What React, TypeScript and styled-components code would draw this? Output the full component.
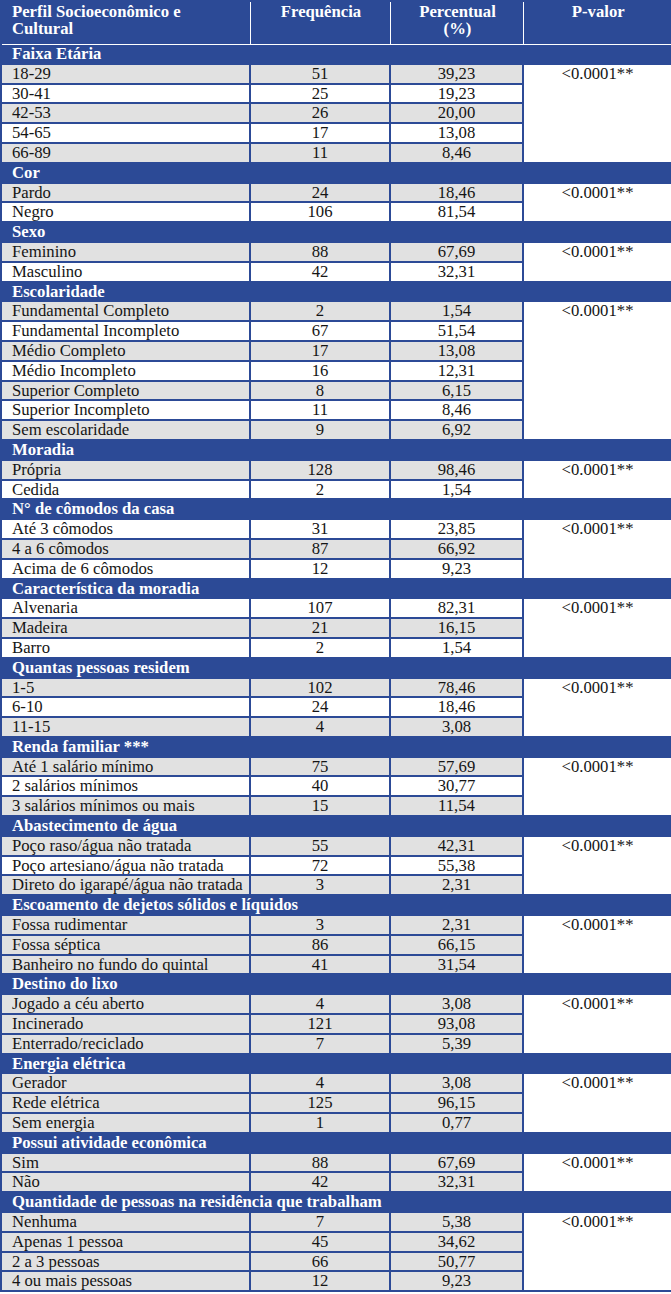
import { Fragment } from "react";
import styled, { createGlobalStyle } from "styled-components";

const BLUE = "#2c4a96";
const GRAY = "#e1e1e1";

const GlobalStyle = createGlobalStyle`
  html, body {
    margin: 0;
    padding: 0;
    background: #ffffff;
  }
  body {
    font-family: "Liberation Serif", "Times New Roman", serif;
  }
`;

const Table = styled.table`
  width: 671px;
  table-layout: fixed;
  border-collapse: collapse;
  border: 2px solid ${BLUE};
  font-family: "Liberation Serif", "Times New Roman", serif;
  font-size: 16.7px;
  color: #151515;
`;

const HeadCell = styled.th<{ $align?: "left" | "center" }>`
  height: 40px;
  padding: 2px 8px 0 10px;
  vertical-align: top;
  text-align: ${({ $align }) => $align ?? "center"};
  line-height: 16.5px;
  font-weight: bold;
  color: #ffffff;
  background: ${BLUE};
  border-right: 1px solid #ffffff;
  border-bottom: 1px solid #ffffff;
  &:last-child {
    border-right: none;
  }
`;

const SectionCell = styled.td`
  height: 17.8px;
  padding: 0 10px;
  line-height: 17.8px;
  font-weight: bold;
  color: #ffffff;
  background: ${BLUE};
  border: none;
  white-space: nowrap;
`;

const DataCell = styled.td<{ $shade: boolean; $align?: "left" | "center" }>`
  height: 17.8px;
  padding: 0 4px 0 ${({ $align }) => ($align === "left" ? "10px" : "4px")};
  line-height: 17.8px;
  text-align: ${({ $align }) => $align ?? "center"};
  background: ${({ $shade }) => ($shade ? GRAY : "#ffffff")};
  border: 2px solid ${BLUE};
  white-space: nowrap;
  overflow: hidden;
`;

const PValueCell = styled.td`
  padding: 0 4px;
  vertical-align: top;
  text-align: center;
  line-height: 17.8px;
  background: #ffffff;
  border: 2px solid ${BLUE};
`;

type Row = [string, string, string];

type Section = {
  title: string;
  shades: string;
  rows: Row[];
};

const sections: Section[] = [
  {
    title: "Faixa Etária",
    shades: "GWGWG",
    rows: [
      ["18-29", "51", "39,23"],
      ["30-41", "25", "19,23"],
      ["42-53", "26", "20,00"],
      ["54-65", "17", "13,08"],
      ["66-89", "11", "8,46"],
    ],
  },
  {
    title: "Cor",
    shades: "GW",
    rows: [
      ["Pardo", "24", "18,46"],
      ["Negro", "106", "81,54"],
    ],
  },
  {
    title: "Sexo",
    shades: "GW",
    rows: [
      ["Feminino", "88", "67,69"],
      ["Masculino", "42", "32,31"],
    ],
  },
  {
    title: "Escolaridade",
    shades: "GWGWGWG",
    rows: [
      ["Fundamental Completo", "2", "1,54"],
      ["Fundamental Incompleto", "67", "51,54"],
      ["Médio Completo", "17", "13,08"],
      ["Médio Incompleto", "16", "12,31"],
      ["Superior Completo", "8", "6,15"],
      ["Superior Incompleto", "11", "8,46"],
      ["Sem escolaridade", "9", "6,92"],
    ],
  },
  {
    title: "Moradia",
    shades: "GW",
    rows: [
      ["Própria", "128", "98,46"],
      ["Cedida", "2", "1,54"],
    ],
  },
  {
    title: "N° de cômodos da casa",
    shades: "WGW",
    rows: [
      ["Até 3 cômodos", "31", "23,85"],
      ["4 a 6 cômodos", "87", "66,92"],
      ["Acima de 6 cômodos", "12", "9,23"],
    ],
  },
  {
    title: "Característica da moradia",
    shades: "WGW",
    rows: [
      ["Alvenaria", "107", "82,31"],
      ["Madeira", "21", "16,15"],
      ["Barro", "2", "1,54"],
    ],
  },
  {
    title: "Quantas pessoas residem",
    shades: "GWG",
    rows: [
      ["1-5", "102", "78,46"],
      ["6-10", "24", "18,46"],
      ["11-15", "4", "3,08"],
    ],
  },
  {
    title: "Renda familiar ***",
    shades: "GWG",
    rows: [
      ["Até 1 salário mínimo", "75", "57,69"],
      ["2 salários mínimos", "40", "30,77"],
      ["3 salários mínimos ou mais", "15", "11,54"],
    ],
  },
  {
    title: "Abastecimento de água",
    shades: "GWG",
    rows: [
      ["Poço raso/água não tratada", "55", "42,31"],
      ["Poço artesiano/água não tratada", "72", "55,38"],
      ["Direto do igarapé/água não tratada", "3", "2,31"],
    ],
  },
  {
    title: "Escoamento de dejetos sólidos e líquidos",
    shades: "GGG",
    rows: [
      ["Fossa rudimentar", "3", "2,31"],
      ["Fossa séptica", "86", "66,15"],
      ["Banheiro no fundo do quintal", "41", "31,54"],
    ],
  },
  {
    title: "Destino do lixo",
    shades: "GGG",
    rows: [
      ["Jogado a céu aberto", "4", "3,08"],
      ["Incinerado", "121", "93,08"],
      ["Enterrado/reciclado", "7", "5,39"],
    ],
  },
  {
    title: "Energia elétrica",
    shades: "GGG",
    rows: [
      ["Gerador", "4", "3,08"],
      ["Rede elétrica", "125", "96,15"],
      ["Sem energia", "1", "0,77"],
    ],
  },
  {
    title: "Possui atividade econômica",
    shades: "GG",
    rows: [
      ["Sim", "88", "67,69"],
      ["Não", "42", "32,31"],
    ],
  },
  {
    title: "Quantidade de pessoas na residência que trabalham",
    shades: "GGGG",
    rows: [
      ["Nenhuma", "7", "5,38"],
      ["Apenas 1 pessoa", "45", "34,62"],
      ["2 a 3 pessoas", "66", "50,77"],
      ["4 ou mais pessoas", "12", "9,23"],
    ],
  },
];

const P_VALUE = "<0.0001**";

export default function App() {
  return (
    <>
      <GlobalStyle />
      <Table>
        <colgroup>
          <col style={{ width: 249 }} />
          <col style={{ width: 140 }} />
          <col style={{ width: 133 }} />
          <col style={{ width: 149 }} />
        </colgroup>
        <thead>
          <tr>
            <HeadCell $align="left">
              Perfil Socioeconômico e
              <br />
              Cultural
            </HeadCell>
            <HeadCell>Frequência</HeadCell>
            <HeadCell>
              Percentual
              <br />
              (%)
            </HeadCell>
            <HeadCell>P-valor</HeadCell>
          </tr>
        </thead>
        <tbody>
          {sections.map((section) => (
            <Fragment key={section.title}>
              <tr>
                <SectionCell colSpan={4}>{section.title}</SectionCell>
              </tr>
              {section.rows.map(([label, freq, pct], i) => {
                const shade = section.shades[i] === "G";
                return (
                  <tr key={label}>
                    <DataCell $shade={shade} $align="left">
                      {label}
                    </DataCell>
                    <DataCell $shade={shade}>{freq}</DataCell>
                    <DataCell $shade={shade}>{pct}</DataCell>
                    {i === 0 && (
                      <PValueCell rowSpan={section.rows.length}>{P_VALUE}</PValueCell>
                    )}
                  </tr>
                );
              })}
            </Fragment>
          ))}
        </tbody>
      </Table>
    </>
  );
}
